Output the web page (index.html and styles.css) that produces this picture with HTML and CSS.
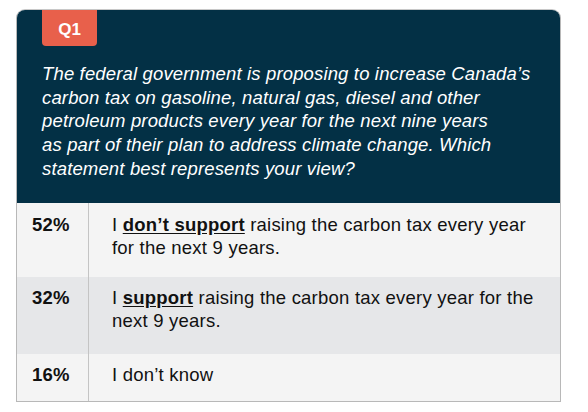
FILE: index.html
```html
<!DOCTYPE html>
<html>
<head>
<meta charset="utf-8">
<link rel="stylesheet" href="styles.css">
</head>
<body>
<div class="card">
  <div class="header">
    <div class="badge">Q1</div>
    <p class="question">The federal government is proposing to increase Canada’s<br>carbon tax on gasoline, natural gas, diesel and other<br>petroleum products every year for the next nine years<br>as part of their plan to address climate change. Which<br>statement best represents your view?</p>
  </div>
  <div class="row row-a">
    <div class="pct">52%</div>
    <div class="ans">I <strong>don’t support</strong> raising the carbon tax every year<br>for the next 9 years.</div>
  </div>
  <div class="row row-b">
    <div class="pct">32%</div>
    <div class="ans">I <strong>support</strong> raising the carbon tax every year for the<br>next 9 years.</div>
  </div>
  <div class="row row-c">
    <div class="pct">16%</div>
    <div class="ans">I don’t know</div>
  </div>
</div>
</body>
</html>
```
FILE: styles.css
```css
html, body {
  margin: 0;
  padding: 0;
  background: #ffffff;
}
body {
  padding: 9px 0 0 16px;
  font-family: "Liberation Sans", Arial, sans-serif;
}
.card {
  width: 545px;
  border: 1px solid #b8b8b8;
  border-top-color: #c8c8c8;
  border-radius: 9px 9px 0 0;
  overflow: hidden;
  box-sizing: border-box;
}
.header {
  background: #033045;
  padding: 0 0 0 25px;
  height: 193px;
  box-sizing: border-box;
}
.badge {
  width: 55px;
  height: 36px;
  box-sizing: border-box;
  padding-top: 3px;
  background: #e8604b;
  border-radius: 0 0 4px 4px;
  color: #ffffff;
  font-weight: bold;
  font-size: 17px;
  display: flex;
  align-items: center;
  justify-content: center;
}
.question {
  margin: 16px 0 0;
  color: #ffffff;
  font-style: italic;
  font-size: 18.5px;
  letter-spacing: 0.15px;
  line-height: 23.7px;
}
.row {
  display: flex;
  box-sizing: border-box;
  color: #111111;
  font-size: 18.5px;
  letter-spacing: 0.22px;
  line-height: 22.5px;
}
.row-a { background: #f4f4f4; height: 74px; padding-top: 11px; }
.row-b { background: #e6e7e9; height: 77px; padding-top: 10px; }
.row-c { background: #f4f4f4; height: 47px; padding-top: 10px; }
.pct {
  width: 72px;
  flex: none;
  box-sizing: border-box;
  padding-left: 15px;
  margin-top: -11px;
  padding-top: 11px;
  font-weight: bold;
  border-right: 1px solid #c4c4c4;
}
.row-b .pct, .row-c .pct {
  margin-top: -10px;
  padding-top: 10px;
}
.ans {
  padding-left: 23px;
}
.ans strong {
  text-decoration: underline;
  text-underline-offset: 2px;
}
```
